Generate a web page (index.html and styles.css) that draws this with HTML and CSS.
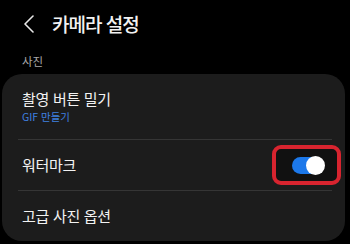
FILE: index.html
```html
<!DOCTYPE html>
<html lang="ko">
<head>
<meta charset="utf-8">
<link rel="stylesheet" href="styles.css">
</head>
<body>
<header class="header">
  <svg class="back" width="10" height="18" viewBox="0 0 10 18"><path d="M9 1 L1 9 L9 17" fill="none" stroke="#e8e8e8" stroke-width="1.6" stroke-linecap="round" stroke-linejoin="round"/></svg>
  <h1 class="title">카메라 설정</h1>
</header>
<div class="section">사진</div>
<div class="card">
  <div class="row row-tall">
    <div class="label">촬영 버튼 밀기</div>
    <div class="sub">GIF 만들기</div>
  </div>
  <div class="divider"></div>
  <div class="row row-toggle">
    <div class="label">워터마크</div>
    <div class="highlight">
      <div class="switch"><div class="thumb"></div></div>
    </div>
  </div>
  <div class="divider"></div>
  <div class="row">
    <div class="label">고급 사진 옵션</div>
  </div>
</div>
</body>
</html>
```
FILE: styles.css
```css
* { box-sizing: border-box; }
html, body { margin: 0; padding: 0; }
body {
  background: #000;
  width: 350px;
  height: 244px;
  overflow: hidden;
  font-family: "Noto Sans CJK KR", "Noto Sans", sans-serif;
  color: #f2f2f2;
}
.header {
  height: 48px;
  display: flex;
  align-items: center;
}
.back {
  margin-left: 24px;
  display: block;
}
.title {
  margin: 0 0 0 18px;
  font-size: 19px;
  font-weight: 500;
  letter-spacing: -1px;
  line-height: 24px;
}
.section {
  height: 26px;
  line-height: 26px;
  padding-left: 22px;
  font-size: 11.5px;
  color: #a8a8a8;
}
.card {
  margin: 0 5px 0 2px;
  background: #1c1c1c;
  border-radius: 20px;
  height: 167px;
}
.row {
  height: 50px;
  display: flex;
  align-items: center;
  padding: 0 4px 0 20px;
}
.row-tall {
  height: 65px;
  flex-direction: column;
  align-items: flex-start;
  justify-content: center;
}
.row-toggle {
  justify-content: space-between;
}
.label {
  font-size: 15px;
  line-height: 20px;
  letter-spacing: -0.3px;
}
.sub {
  font-size: 10.5px;
  line-height: 16px;
  color: #3f80e0;
}
.divider {
  height: 1px;
  background: #353535;
  margin: 0 13px 0 16px;
}
.highlight {
  width: 69px;
  height: 40px;
  border: 4px solid #d8242f;
  border-radius: 9px;
  background: #111;
  display: flex;
  align-items: center;
  padding-left: 16px;
}
.switch {
  width: 32px;
  height: 17px;
  border-radius: 9px;
  background: #1c78ea;
  position: relative;
}
.thumb {
  position: absolute;
  right: -1px;
  top: -1px;
  width: 19px;
  height: 19px;
  border-radius: 50%;
  background: #fff;
}
```
